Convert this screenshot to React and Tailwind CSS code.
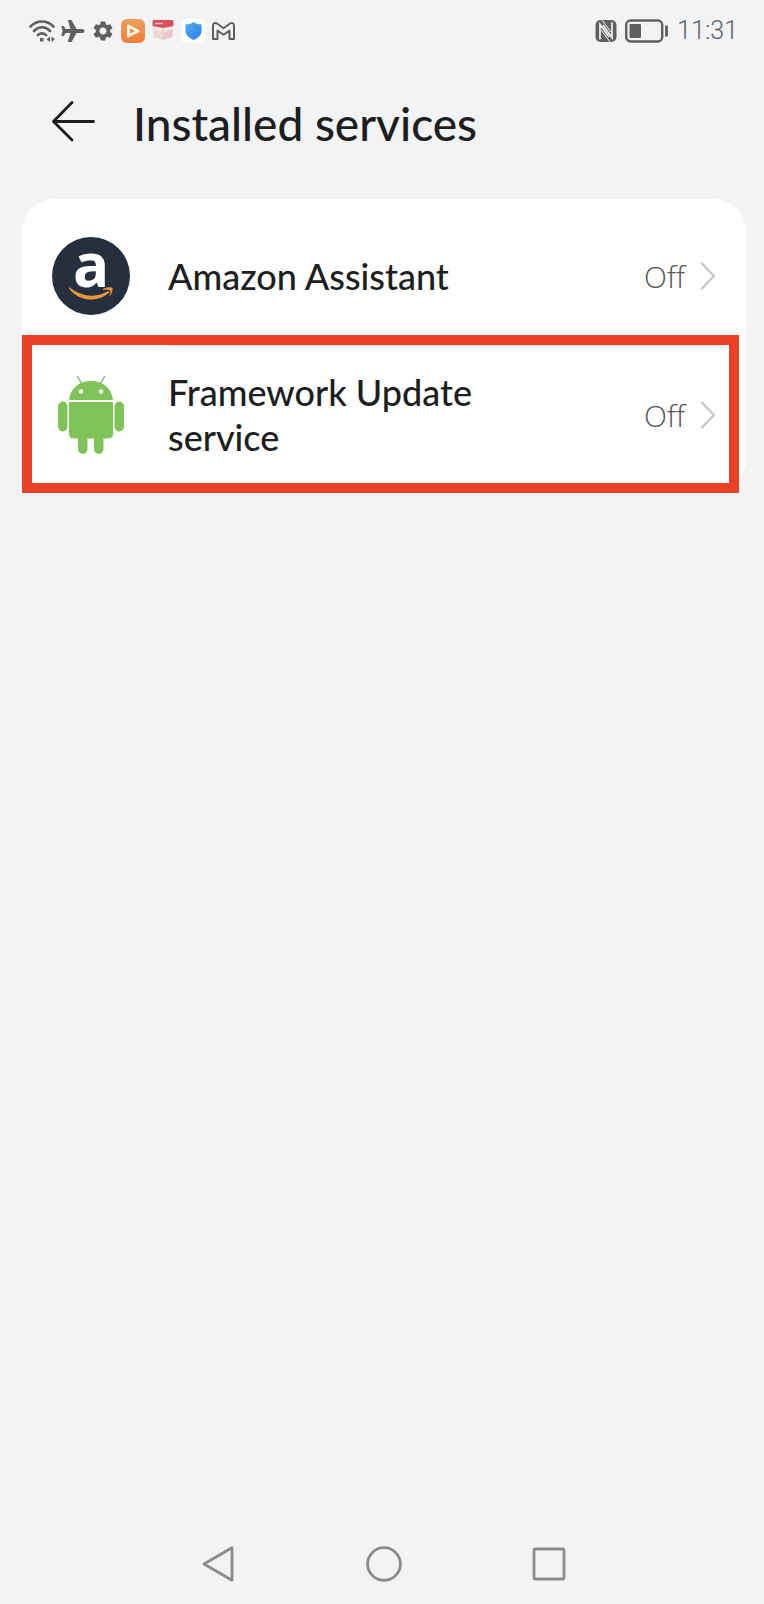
import React from "react";

const services = [
  { id: "amazon", name: "Amazon Assistant", status: "Off", icon: AmazonIcon },
  { id: "framework", name: "Framework Update service", status: "Off", icon: AndroidIcon, highlighted: true },
];

function AmazonIcon() {
  return (
    <span className="relative flex size-[78px] shrink-0 justify-center rounded-full bg-[#252f3e]" aria-hidden="true">
      <span className="font-['Open_Sans',sans-serif] text-[60px] leading-[55px] font-bold text-white">a</span>
      <svg viewBox="0 0 78 78" className="absolute inset-0 size-full">
        <path d="M17 50c13 10.500 28 11 39 4l1.500 1.500C46 65.500 28 65.500 17 51.500z" fill="#e8973a" />
        <path d="M51 52c4-2.200 9-2.200 9.500-.7s-.5 5.700-3.500 8.700c1-3 2-5.500 1-6.500s-4-1-7-.5z" fill="#e8973a" />
      </svg>
    </span>
  );
}

function AndroidIcon() {
  return (
    <svg viewBox="0 0 78 78" className="size-[78px] shrink-0" aria-hidden="true">
      <path d="M25.500 0.500l4.500 8M52.500 0.500l-4.500 8" stroke="#8aa87a" strokeWidth="1.400" strokeLinecap="round" />
      <g fill="#80c459">
        <path d="M17 24C18 12.500 27 5 39 5s21 7.500 22 19z" />
        <path d="M17 26h44v32a4.500 4.500 0 0 1-4.500 4.500h-35A4.500 4.500 0 0 1 17 58z" />
        <rect x="6" y="25.500" width="9.500" height="30" rx="4.750" />
        <rect x="62.500" y="25.500" width="9.500" height="30" rx="4.750" />
        <rect x="26" y="54" width="9.500" height="24" rx="4.750" />
        <rect x="42" y="54" width="9.500" height="24" rx="4.750" />
      </g>
      <circle cx="29" cy="15.500" r="2.200" fill="#fff" />
      <circle cx="49" cy="15.500" r="2.200" fill="#fff" />
    </svg>
  );
}

function StatusBar() {
  return (
    <div className="flex h-[61px] items-center justify-between pr-[26px] pl-[29px] text-[#5f6062]">
      <div className="flex items-center gap-[6px]">
        {/* wifi */}
        <svg viewBox="0 0 26 24" className="h-6 w-[26px]" fill="none" stroke="currentColor" strokeWidth="2.600" strokeLinecap="round">
          <path d="M1.500 7.500C8 0.800 18 0.800 24.500 7.500" />
          <path d="M5 12c4.800-5 11.200-5 16 0" />
          <path d="M8.800 16.200c2.500-2.500 5.900-2.500 8.400 0" />
          <rect x="11" y="19" width="3.500" height="3.500" fill="currentColor" stroke="none" />
          <path d="M21 17.500v5.500l-3.500-2.700zM22.500 17.500v5.500l3.500-2.700z" fill="currentColor" stroke="none" />
        </svg>
        {/* airplane mode */}
        <svg viewBox="0 0 24 24" className="size-6" fill="currentColor">
          <path d="M23.500 12c0-1.300-.9-2-2-2h-6L10.500 1H6.800l2.700 9H4.800L2.600 7H.3L1.500 12 .3 17h2.300l2.200-3h4.700L6.800 23h3.700l5-9h6c1.100 0 2-.7 2-2z" />
        </svg>
        {/* settings */}
        <svg viewBox="0 0 24 24" className="size-6" fill="currentColor">
          <path d="M19.140 12.940c.04-.3.060-.610.060-.940 0-.320-.020-.640-.070-.940l2.030-1.580c.180-.140.230-.410.120-.610l-1.920-3.320c-.120-.220-.370-.290-.590-.220l-2.390.960c-.5-.380-1.030-.7-1.620-.940l-.360-2.540c-.040-.240-.240-.410-.480-.410h-3.840c-.240 0-.430.170-.470.410l-.360 2.540c-.590.240-1.130.570-1.620.940l-2.390-.960c-.220-.080-.470 0-.590.220L2.740 8.870c-.120.210-.080.470.120.610l2.030 1.580c-.050.3-.090.630-.090.940s.020.640.070.940l-2.030 1.580c-.180.140-.230.410-.120.610l1.920 3.320c.120.220.370.290.590.220l2.390-.960c.5.380 1.030.7 1.620.940l.360 2.540c.050.240.240.410.480.410h3.840c.240 0 .440-.170.470-.410l.360-2.540c.590-.240 1.130-.560 1.620-.940l2.390.960c.220.080.470 0 .590-.220l1.920-3.320c.120-.220.070-.470-.120-.610l-2.010-1.580zM12 15.600c-1.980 0-3.600-1.620-3.600-3.600s1.620-3.600 3.600-3.600 3.600 1.620 3.600 3.600-1.620 3.600-3.600 3.600z" />
        </svg>
        {/* video app */}
        <svg viewBox="0 0 24 24" className="size-6">
          <defs>
            <linearGradient id="video" x1="0" y1="0" x2="0" y2="1">
              <stop offset="0" stopColor="#eba05a" />
              <stop offset="1" stopColor="#ee7f3c" />
            </linearGradient>
          </defs>
          <rect width="24" height="24" rx="6" fill="url(#video)" />
          <path d="M7.500 7v10l9.500-5z" fill="none" stroke="#fff3df" strokeWidth="3" strokeLinejoin="round" />
        </svg>
        {/* gift box app */}
        <svg viewBox="0 0 24 24" className="size-6">
          <path d="M2 7h10v14l-9.500-3z" fill="#ecd7d9" />
          <path d="M12 7h10l-.5 11-9.500 3z" fill="#e6c8cc" />
          <path d="M0.500 10l1.500-3 10 2-1.500 4zM23.500 10l-1.500-3-10 2 1.500 4z" fill="#f3e6e7" />
          <path d="M1.500 2.500Q1.500 1 3 1h18Q22.500 1 22.500 2.500V7L12 9 1.500 7z" fill="#d9505a" />
          <path d="M4 4.500h8" stroke="#f4b9bd" strokeWidth="1.500" />
        </svg>
        {/* shield app */}
        <svg viewBox="0 0 24 24" className="size-6">
          <defs>
            <linearGradient id="shield" x1="0" y1="0" x2="1" y2="1">
              <stop offset="0" stopColor="#52acf5" />
              <stop offset="1" stopColor="#2c7de6" />
            </linearGradient>
          </defs>
          <rect width="24" height="24" rx="5" fill="#fcfdfe" />
          <path d="M12.500 3c2.500 1.800 5 2.400 8 2.500v6.500c0 4-3.500 7-8 9-4.500-2-8-5-8-9V5.500c3-.1 5.500-.7 8-2.500z" fill="url(#shield)" />
        </svg>
        {/* mail */}
        <svg viewBox="0 0 24 24" className="size-6" fill="none" stroke="currentColor" strokeWidth="2" strokeLinejoin="round">
          <path d="M2 20V6.500C2 4 4.300 3.300 6 4.500l6.500 4.700L19 4.500c1.700-1.200 4-.5 4 2V20h-4.500v-8.500l-6 4.200-6-4.200V20z" />
        </svg>
      </div>
      <div className="flex items-center gap-2">
        {/* nfc */}
        <svg viewBox="0 0 22 24" className="h-6 w-[22px]">
          <rect x="0.500" y="1" width="21" height="22" rx="5" fill="currentColor" />
          <path d="M5 20.500V5.500L14 18M17 3.500v15L8 6" fill="none" stroke="#f1f3f5" strokeWidth="1.700" />
          <path d="M7 1l9 12M6 11l9 12" fill="none" stroke="#f1f3f5" strokeWidth="1" />
        </svg>
        {/* battery */}
        <svg viewBox="0 0 44 24" className="h-6 w-[44px]" fill="none" stroke="currentColor">
          <rect x="1.200" y="1.500" width="36" height="21" rx="4.500" strokeWidth="2.400" />
          <rect x="4.500" y="5" width="11.500" height="14" rx="1" fill="currentColor" stroke="none" />
          <path d="M41.500 6.500v11" strokeWidth="2.800" />
        </svg>
        <span className="font-['Roboto',sans-serif] text-[25px] leading-6 font-light">11:31</span>
      </div>
    </div>
  );
}

function ServiceRow({ service }) {
  const Icon = service.icon;
  return (
    <li className="relative">
      <button type="button" className="flex h-[138px] w-full items-center px-[30px] text-left">
        <Icon />
        <span className="ml-[38px] max-w-[360px] flex-1 text-[36px] leading-[45px] font-medium text-[#1d1e20]">
          {service.name}
        </span>
        <span className="ml-auto font-['Open_Sans',sans-serif] text-[30px] leading-[45px] font-light text-[#555658]">
          {service.status}
        </span>
        <svg viewBox="0 0 16 28" className="ml-[15px] h-7 w-4 shrink-0" fill="none" stroke="#c6c7c9" strokeWidth="2.400" strokeLinecap="round" strokeLinejoin="round">
          <path d="M2 1.500L14 14 2 26.500" />
        </svg>
      </button>
      {service.highlighted && (
        <div className="pointer-events-none absolute -top-[11px] right-[7px] -bottom-[9px] left-0 border-10 border-[#ea4026]" />
      )}
    </li>
  );
}

function NavBar() {
  return (
    <nav className="flex h-20 justify-center pl-1 text-[#8b8c8e]">
      <button type="button" aria-label="Back" className="flex w-[165px] items-center justify-center">
        <svg viewBox="0 0 36 36" className="size-9" fill="none" stroke="currentColor" strokeWidth="2.800" strokeLinejoin="round">
          <path d="M3 18L31 1.800v32.400z" />
        </svg>
      </button>
      <button type="button" aria-label="Home" className="flex w-[165px] items-center justify-center">
        <svg viewBox="0 0 36 36" className="size-9" fill="none" stroke="currentColor" strokeWidth="2.800">
          <circle cx="18" cy="18" r="16.400" />
        </svg>
      </button>
      <button type="button" aria-label="Recent apps" className="flex w-[165px] items-center justify-center">
        <svg viewBox="0 0 36 36" className="size-9" fill="none" stroke="currentColor" strokeWidth="2.800">
          <rect x="3" y="3" width="30" height="30" rx="1.500" />
        </svg>
      </button>
    </nav>
  );
}

export default function App() {
  return (
    <div className="flex min-h-screen flex-col bg-[#f1f3f5] font-['Lato',sans-serif]">
      <StatusBar />

      <header className="flex h-[126px] items-center pl-[52px]">
        <button type="button" aria-label="Back">
          <svg viewBox="0 0 43 46" className="h-[46px] w-[43px]" fill="none" stroke="#1d1e20" strokeWidth="2.800" strokeLinecap="round" strokeLinejoin="round">
            <path d="M20 1.500L1.500 20.500 20 39M1.500 20.500H41.500" />
          </svg>
        </button>
        <h1 className="ml-[38px] text-[46px] leading-[52px] font-medium text-[#1d1e20]">Installed services</h1>
      </header>

      <main className="mt-3 mr-[18px] ml-[22px] flex-1">
        <ul className="rounded-[32px] bg-white py-2">
          {services.map((service, index) => (
            <React.Fragment key={service.id}>
              {index > 0 && <li role="separator" className="mr-6 ml-[146px] h-px bg-[#dcdddf]" />}
              <ServiceRow service={service} />
            </React.Fragment>
          ))}
        </ul>
      </main>

      <NavBar />
    </div>
  );
}
